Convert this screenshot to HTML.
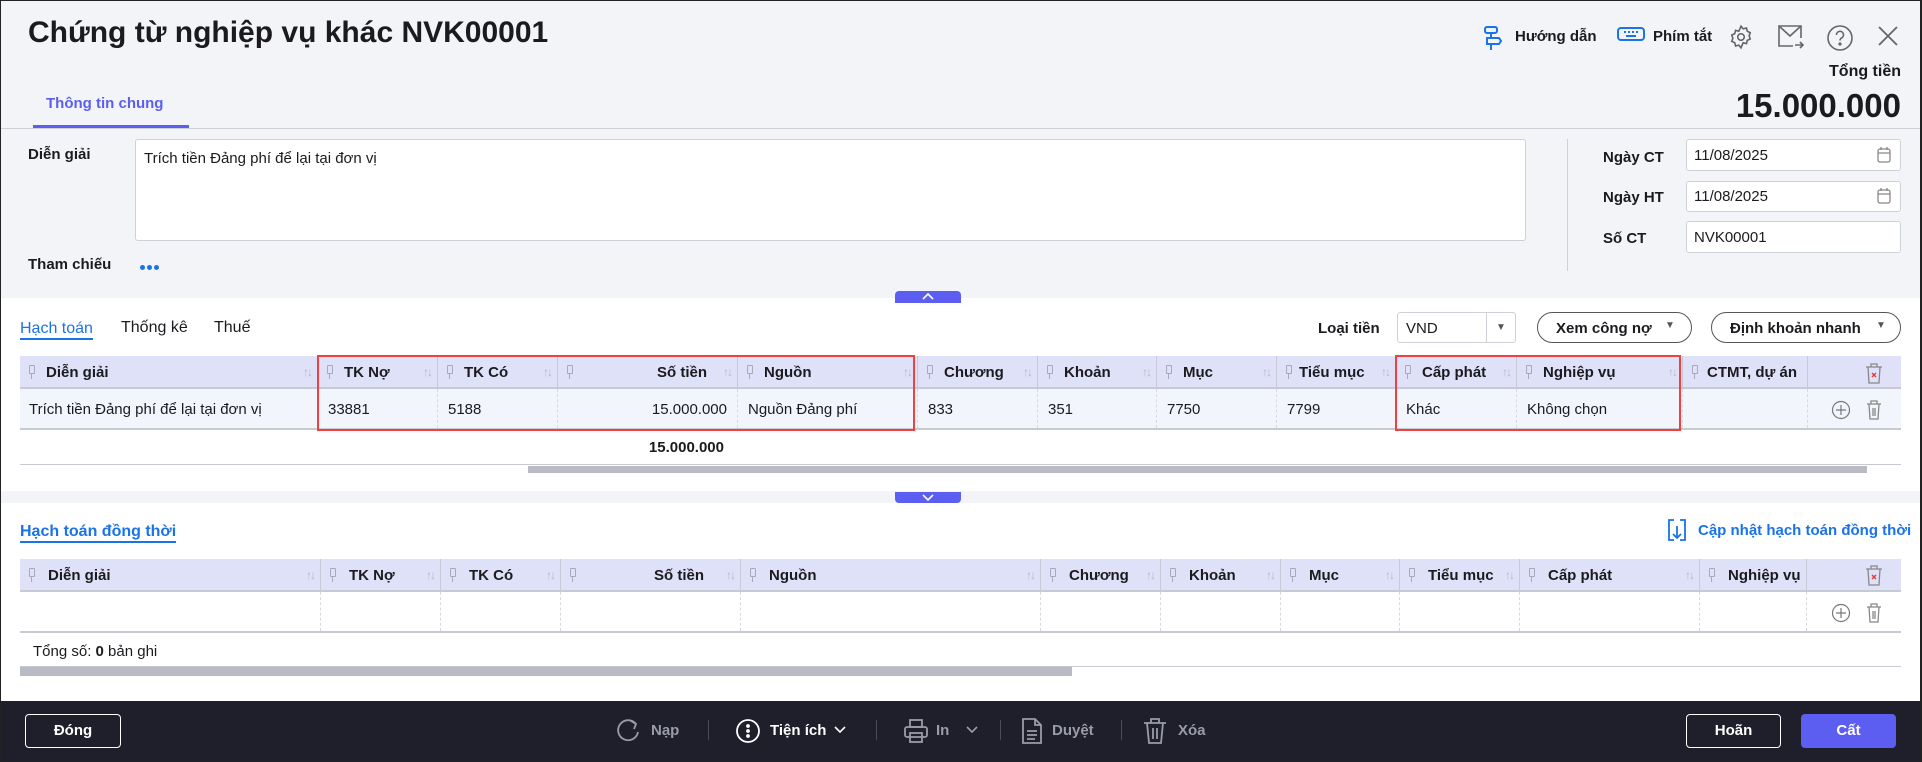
<!DOCTYPE html>
<html><head><meta charset="utf-8"><style>
*{box-sizing:border-box;margin:0;padding:0}
body{width:1922px;height:762px;overflow:hidden;font-family:"Liberation Sans",sans-serif;color:#1b1b1f;font-size:15px;background:#fff;position:relative}
.a{position:absolute;white-space:nowrap}
.b{font-weight:bold}
.hdr{position:absolute;left:0;top:0;width:1922px;height:298px;background:#f3f4f8}
.inp{position:absolute;background:#fff;border:1px solid #cfd1d8;border-radius:3px}
.th{position:absolute;height:33px;background:#dfe1f9;border-bottom:2px solid #c8cad3}
.cell{position:absolute;top:0;height:100%;border-left:1px dashed #d8d9e0;font-size:15px}
.hc{position:absolute;top:0;height:100%;border-left:1px solid #c8cad8;font-weight:bold;font-size:15px}
.hc::before{content:"";position:absolute;left:9px;top:9px;width:4px;height:7px;border:1px solid #a8aabb;border-radius:1px}
.hc::after{content:"";position:absolute;left:11px;top:17px;width:1px;height:6px;background:#a8aabb}
.hc.np::before,.hc.np::after{display:none}
.sort{position:absolute;right:6px;top:9px;color:#b4b6c4;font-size:12px;font-weight:normal;letter-spacing:-2px}
.btn{position:absolute;border-radius:4px;color:#fff;font-weight:bold;text-align:center;line-height:32px;font-size:15px}
.sep{position:absolute;top:720px;width:1px;height:20px;background:#4a4c5a}
.ft{position:absolute;top:722px;color:#9a9ca8;font-weight:bold;font-size:15px}
</style></head><body>
<div class="hdr"></div>
<div class="a b" style="left:28px;top:16px;font-size:30px">Chứng từ nghiệp vụ khác NVK00001</div>
<div class="a b" style="left:46px;top:95px;color:#5b5ef0;font-size:15px">Thông tin chung</div>
<div class="a" style="left:33px;top:125px;width:156px;height:3px;background:#5b5ef0"></div>
<div class="a" style="left:0;top:128px;width:1922px;height:1px;background:#cfd1d8"></div>

<!-- top right -->
<svg class="a" style="left:1483px;top:25px" width="20" height="26" viewBox="0 0 20 26" fill="none" stroke="#1a73e8" stroke-width="2"><rect x="2" y="2" width="12" height="6" rx="2"/><path d="M4 13h12l2 3-2 3H4z"/><path d="M8 8v5M8 19v6"/></svg>
<div class="a b" style="left:1515px;top:28px;font-size:15px">Hướng dẫn</div>
<svg class="a" style="left:1617px;top:26px" width="28" height="18" viewBox="0 0 28 18" fill="none" stroke="#1a73e8" stroke-width="2"><rect x="1" y="2" width="26" height="12" rx="3"/><path d="M7 6h2M11 6h2M15 6h2M19 6h2M9 10h10"/></svg>
<div class="a b" style="left:1653px;top:28px;font-size:15px">Phím tắt</div>
<svg class="a" style="left:1728px;top:24px" width="26" height="26" viewBox="0 0 24 24" fill="none" stroke="#666" stroke-width="1.5"><circle cx="12" cy="12" r="3"/><path d="M12 2l2 2.5 3-.8.8 3 2.7 1.3-1 2.9 1 2.9-2.7 1.3-.8 3-3-.8L12 22l-2-2.5-3 .8-.8-3-2.7-1.3 1-2.9-1-2.9 2.7-1.3.8-3 3 .8z"/></svg>
<svg class="a" style="left:1777px;top:24px" width="28" height="26" viewBox="0 0 28 26" fill="none" stroke="#666" stroke-width="1.6"><path d="M24 14V2H2v20h14"/><path d="M2 2l11 10L24 2"/><path d="M18 21h8M23 18l3 3-3 3"/></svg>
<svg class="a" style="left:1826px;top:24px" width="28" height="28" viewBox="0 0 28 28" fill="none" stroke="#666" stroke-width="1.6"><circle cx="14" cy="14" r="12"/><path d="M10.5 11a3.5 3.5 0 1 1 5 3c-1 .6-1.5 1.3-1.5 2.5"/><circle cx="14" cy="20" r=".8" fill="#666"/></svg>
<svg class="a" style="left:1877px;top:25px" width="22" height="22" viewBox="0 0 22 22" stroke="#666" stroke-width="1.8"><path d="M2 2l18 18M20 2L2 20"/></svg>
<div class="a b" style="right:21px;top:63px;font-size:16px">Tổng tiền</div>
<div class="a b" style="right:21px;top:87px;font-size:33px">15.000.000</div>

<!-- form -->
<div class="a b" style="left:28px;top:146px">Diễn giải</div>
<div class="inp" style="left:135px;top:139px;width:1391px;height:102px"></div>
<div class="a" style="left:144px;top:150px">Trích tiền Đảng phí để lại tại đơn vị</div>
<div class="a b" style="left:28px;top:256px">Tham chiếu</div>
<div class="a" style="left:140px;top:265px;width:5px;height:5px;border-radius:50%;background:#1a73e8;box-shadow:7px 0 #1a73e8,14px 0 #1a73e8"></div>
<div class="a" style="left:1567px;top:139px;width:1px;height:132px;background:#cfd1d8"></div>
<div class="a b" style="left:1603px;top:149px">Ngày CT</div>
<div class="a b" style="left:1603px;top:189px">Ngày HT</div>
<div class="a b" style="left:1603px;top:230px">Số CT</div>
<div class="inp" style="left:1686px;top:139px;width:215px;height:32px"></div>
<div class="inp" style="left:1686px;top:181px;width:215px;height:31px"></div>
<div class="inp" style="left:1686px;top:221px;width:215px;height:32px"></div>
<div class="a" style="left:1694px;top:147px">11/08/2025</div>
<div class="a" style="left:1694px;top:188px">11/08/2025</div>
<div class="a" style="left:1694px;top:229px">NVK00001</div>
<svg class="a" style="left:1877px;top:146px" width="14" height="17" viewBox="0 0 14 17" fill="none" stroke="#888" stroke-width="1.3"><rect x="1" y="3" width="12" height="13" rx="2"/><path d="M1 7h12M4 1v3M10 1v3"/></svg>
<svg class="a" style="left:1877px;top:187px" width="14" height="17" viewBox="0 0 14 17" fill="none" stroke="#888" stroke-width="1.3"><rect x="1" y="3" width="12" height="13" rx="2"/><path d="M1 7h12M4 1v3M10 1v3"/></svg>

<div class="a" style="left:895px;top:291px;width:66px;height:12px;background:#5b5ef0;border-radius:4px 4px 0 0"></div>
<svg class="a" style="left:921px;top:292px" width="14" height="9" viewBox="0 0 14 9" fill="none" stroke="#fff" stroke-width="1.6"><path d="M2 7l5-5 5 5"/></svg>

<!-- tabs -->
<div class="a" style="left:20px;top:319px;color:#1a73e8;font-size:16px;border-bottom:2px solid #1a73e8;line-height:19px">Hạch toán</div>
<div class="a" style="left:121px;top:319px;font-size:16px">Thống kê</div>
<div class="a" style="left:214px;top:319px;font-size:16px">Thuế</div>
<div class="a b" style="left:1318px;top:320px">Loại tiền</div>
<div class="inp" style="left:1397px;top:312px;width:119px;height:31px"></div>
<div class="a" style="left:1406px;top:320px">VND</div>
<div class="a" style="left:1486px;top:313px;width:1px;height:29px;background:#cfd1d8"></div>
<div class="a" style="left:1496px;top:322px;font-size:10px;color:#555">▼</div>
<div class="a" style="left:1537px;top:312px;width:155px;height:31px;border:1px solid #555;border-radius:16px;background:#fff"></div>
<div class="a b" style="left:1556px;top:320px">Xem công nợ</div>
<div class="a" style="left:1665px;top:320px;font-size:10px;color:#555">▼</div>
<div class="a" style="left:1711px;top:312px;width:190px;height:31px;border:1px solid #555;border-radius:16px;background:#fff"></div>
<div class="a b" style="left:1730px;top:320px">Định khoản nhanh</div>
<div class="a" style="left:1876px;top:320px;font-size:10px;color:#555">▼</div>

<!-- table 1 -->
<div class="th" style="left:20px;top:356px;width:1881px">
 <div class="hc" style="left:0;width:297px;border-left:none"><span class="a" style="left:26px;top:8px">Diễn giải</span><span class="sort">↑↓</span></div>
 <div class="hc" style="left:297px;width:120px"><span class="a" style="left:26px;top:8px">TK Nợ</span><span class="sort">↑↓</span></div>
 <div class="hc" style="left:417px;width:120px"><span class="a" style="left:26px;top:8px">TK Có</span><span class="sort">↑↓</span></div>
 <div class="hc" style="left:537px;width:180px"><span class="a" style="right:30px;top:8px">Số tiền</span><span class="sort">↑↓</span></div>
 <div class="hc" style="left:717px;width:180px"><span class="a" style="left:26px;top:8px">Nguồn</span><span class="sort">↑↓</span></div>
 <div class="hc" style="left:897px;width:120px"><span class="a" style="left:26px;top:8px">Chương</span><span class="sort">↑↓</span></div>
 <div class="hc" style="left:1017px;width:119px"><span class="a" style="left:26px;top:8px">Khoản</span><span class="sort">↑↓</span></div>
 <div class="hc" style="left:1136px;width:120px"><span class="a" style="left:26px;top:8px">Mục</span><span class="sort">↑↓</span></div>
 <div class="hc" style="left:1256px;width:119px"><span class="a" style="left:22px;top:8px">Tiểu mục</span><span class="sort">↑↓</span></div>
 <div class="hc" style="left:1375px;width:121px"><span class="a" style="left:26px;top:8px">Cấp phát</span><span class="sort">↑↓</span></div>
 <div class="hc" style="left:1496px;width:166px"><span class="a" style="left:26px;top:8px">Nghiệp vụ</span><span class="sort">↑↓</span></div>
 <div class="hc" style="left:1662px;width:125px"><span class="a" style="left:24px;top:8px">CTMT, dự án</span></div>
 <div class="hc np" style="left:1787px;width:94px"></div>
</div>
<div class="a" style="left:20px;top:389px;width:1881px;height:41px;background:#f3f5fd;border-bottom:2px solid #c8cad3">
 <div class="cell" style="left:0;width:297px;border:none"><span class="a" style="left:9px;top:12px">Trích tiền Đảng phí để lại tại đơn vị</span></div>
 <div class="cell" style="left:297px;width:120px"><span class="a" style="left:10px;top:12px">33881</span></div>
 <div class="cell" style="left:417px;width:120px"><span class="a" style="left:10px;top:12px">5188</span></div>
 <div class="cell" style="left:537px;width:180px"><span class="a" style="right:10px;top:12px">15.000.000</span></div>
 <div class="cell" style="left:717px;width:180px"><span class="a" style="left:10px;top:12px">Nguồn Đảng phí</span></div>
 <div class="cell" style="left:897px;width:120px"><span class="a" style="left:10px;top:12px">833</span></div>
 <div class="cell" style="left:1017px;width:119px"><span class="a" style="left:10px;top:12px">351</span></div>
 <div class="cell" style="left:1136px;width:120px"><span class="a" style="left:10px;top:12px">7750</span></div>
 <div class="cell" style="left:1256px;width:119px"><span class="a" style="left:10px;top:12px">7799</span></div>
 <div class="cell" style="left:1375px;width:121px"><span class="a" style="left:10px;top:12px">Khác</span></div>
 <div class="cell" style="left:1496px;width:166px"><span class="a" style="left:10px;top:12px">Không chọn</span></div>
 <div class="cell" style="left:1662px;width:125px"></div>
 <div class="cell" style="left:1787px;width:94px"></div>
</div>
<div class="a" style="left:317px;top:355px;width:598px;height:76px;border:2px solid #f04040"></div>
<div class="a" style="left:1395px;top:355px;width:286px;height:76px;border:2px solid #f04040"></div>
<div class="a b" style="right:1198px;top:439px">15.000.000</div>
<div class="a" style="left:20px;top:464px;width:1881px;height:1px;background:#c8cad3"></div>
<div class="a" style="left:528px;top:466px;width:1339px;height:7px;background:#b8bbc3"></div>

<div class="a" style="left:0;top:491px;width:1922px;height:12px;background:#f3f4f8"></div>
<div class="a" style="left:895px;top:492px;width:66px;height:11px;background:#5b5ef0;border-radius:0 0 4px 4px"></div>
<svg class="a" style="left:921px;top:493px" width="14" height="9" viewBox="0 0 14 9" fill="none" stroke="#fff" stroke-width="1.6"><path d="M2 2l5 5 5-5"/></svg>

<!-- table 2 -->
<div class="a b" style="left:20px;top:522px;color:#1a73e8;font-size:16px;border-bottom:2px solid #1a73e8;line-height:19px">Hạch toán đồng thời</div>
<svg class="a" style="left:1666px;top:518px" width="22" height="24" viewBox="0 0 22 24" fill="none" stroke="#1a73e8" stroke-width="1.8"><path d="M8 2H3v20h5M14 2h5v20h-5M11 8v12M7 16l4 4 4-4"/></svg>
<div class="a" style="left:1698px;top:522px;color:#1a73e8;font-size:15px;font-weight:bold">Cập nhật hạch toán đồng thời</div>
<div class="th" style="left:20px;top:559px;width:1881px">
 <div class="hc" style="left:0;width:300px;border-left:none"><span class="a" style="left:28px;top:8px">Diễn giải</span><span class="sort">↑↓</span></div>
 <div class="hc" style="left:300px;width:120px"><span class="a" style="left:28px;top:8px">TK Nợ</span><span class="sort">↑↓</span></div>
 <div class="hc" style="left:420px;width:120px"><span class="a" style="left:28px;top:8px">TK Có</span><span class="sort">↑↓</span></div>
 <div class="hc" style="left:540px;width:180px"><span class="a" style="right:36px;top:8px">Số tiền</span><span class="sort">↑↓</span></div>
 <div class="hc" style="left:720px;width:300px"><span class="a" style="left:28px;top:8px">Nguồn</span><span class="sort">↑↓</span></div>
 <div class="hc" style="left:1020px;width:120px"><span class="a" style="left:28px;top:8px">Chương</span><span class="sort">↑↓</span></div>
 <div class="hc" style="left:1140px;width:120px"><span class="a" style="left:28px;top:8px">Khoản</span><span class="sort">↑↓</span></div>
 <div class="hc" style="left:1260px;width:119px"><span class="a" style="left:28px;top:8px">Mục</span><span class="sort">↑↓</span></div>
 <div class="hc" style="left:1379px;width:120px"><span class="a" style="left:28px;top:8px">Tiểu mục</span><span class="sort">↑↓</span></div>
 <div class="hc" style="left:1499px;width:180px"><span class="a" style="left:28px;top:8px">Cấp phát</span><span class="sort">↑↓</span></div>
 <div class="hc" style="left:1679px;width:107px"><span class="a" style="left:28px;top:8px">Nghiệp vụ</span></div>
 <div class="hc np" style="left:1786px;width:95px"></div>
</div>
<div class="a" style="left:20px;top:592px;width:1881px;height:41px;border-bottom:2px solid #c8cad3">
 <div class="cell" style="left:300px;width:120px"></div><div class="cell" style="left:420px;width:120px"></div><div class="cell" style="left:540px;width:180px"></div><div class="cell" style="left:720px;width:300px"></div><div class="cell" style="left:1020px;width:120px"></div><div class="cell" style="left:1140px;width:120px"></div><div class="cell" style="left:1260px;width:119px"></div><div class="cell" style="left:1379px;width:120px"></div><div class="cell" style="left:1499px;width:180px"></div><div class="cell" style="left:1679px;width:107px"></div><div class="cell" style="left:1786px;width:95px"></div>
</div>
<div class="a" style="left:33px;top:643px">Tổng số: <b>0</b> bản ghi</div>
<div class="a" style="left:20px;top:666px;width:1881px;height:1px;background:#c8cad3"></div>
<div class="a" style="left:20px;top:667px;width:1052px;height:9px;background:#b8bbc3"></div>

<!-- row icons -->
<svg class="a" style="left:1865px;top:362px" width="18" height="22" viewBox="0 0 18 22" fill="none" stroke="#888" stroke-width="1.3"><path d="M1 5h16M6 5V2h6v3M3 5l1 16h10l1-16"/><path d="M7 11l4 4M11 11l-4 4" stroke="#e33"/></svg>
<svg class="a" style="left:1865px;top:564px" width="18" height="22" viewBox="0 0 18 22" fill="none" stroke="#888" stroke-width="1.3"><path d="M1 5h16M6 5V2h6v3M3 5l1 16h10l1-16"/><path d="M7 11l4 4M11 11l-4 4" stroke="#e33"/></svg>
<svg class="a" style="left:1831px;top:400px" width="20" height="20" viewBox="0 0 20 20" fill="none" stroke="#777" stroke-width="1.2"><circle cx="10" cy="10" r="8.5"/><path d="M10 5v10M5 10h10"/></svg>
<svg class="a" style="left:1866px;top:399px" width="16" height="21" viewBox="0 0 16 21" fill="none" stroke="#888" stroke-width="1.3"><path d="M1 5h14M5 5V2h6v3M3 5l1 15h8l1-15M7 9v8M9 9v8"/></svg>
<svg class="a" style="left:1831px;top:603px" width="20" height="20" viewBox="0 0 20 20" fill="none" stroke="#777" stroke-width="1.2"><circle cx="10" cy="10" r="8.5"/><path d="M10 5v10M5 10h10"/></svg>
<svg class="a" style="left:1866px;top:602px" width="16" height="21" viewBox="0 0 16 21" fill="none" stroke="#888" stroke-width="1.3"><path d="M1 5h14M5 5V2h6v3M3 5l1 15h8l1-15M7 9v8M9 9v8"/></svg>

<!-- footer -->
<div class="a" style="left:0;top:701px;width:1922px;height:61px;background:#1e1f2b"></div>
<div class="btn" style="left:25px;top:714px;width:96px;height:34px;border:1px solid #fff">Đóng</div>
<svg class="a" style="left:617px;top:718px" width="24" height="26" viewBox="0 0 24 26" fill="none" stroke="#9a9ca8" stroke-width="1.8"><path d="M19 6A10 10 0 1 0 21 14"/><path d="M14 3l5 3-2 5"/></svg>
<div class="ft" style="left:651px">Nạp</div>
<div class="sep" style="left:708px"></div>
<svg class="a" style="left:735px;top:718px" width="26" height="26" viewBox="0 0 26 26" fill="none" stroke="#fff" stroke-width="1.8"><circle cx="13" cy="13" r="11"/><circle cx="13" cy="8" r="1" fill="#fff"/><circle cx="13" cy="13" r="1" fill="#fff"/><circle cx="13" cy="18" r="1" fill="#fff"/></svg>
<div class="ft" style="left:770px;color:#fff">Tiện ích</div>
<svg class="a" style="left:834px;top:726px" width="12" height="8" viewBox="0 0 12 8" fill="none" stroke="#fff" stroke-width="1.6"><path d="M1 1l5 5 5-5"/></svg>
<div class="sep" style="left:876px"></div>
<svg class="a" style="left:903px;top:718px" width="26" height="26" viewBox="0 0 26 26" fill="none" stroke="#9a9ca8" stroke-width="1.8"><rect x="7" y="2" width="12" height="7"/><rect x="2" y="9" width="22" height="10" rx="2"/><rect x="7" y="15" width="12" height="9"/></svg>
<div class="ft" style="left:936px">In</div>
<svg class="a" style="left:966px;top:726px" width="12" height="8" viewBox="0 0 12 8" fill="none" stroke="#9a9ca8" stroke-width="1.6"><path d="M1 1l5 5 5-5"/></svg>
<div class="sep" style="left:1000px"></div>
<svg class="a" style="left:1021px;top:717px" width="22" height="28" viewBox="0 0 22 28" fill="none" stroke="#9a9ca8" stroke-width="1.8"><path d="M2 2h12l6 6v18H2z"/><path d="M14 2v6h6M6 14h10M6 18h10M6 22h8"/></svg>
<div class="ft" style="left:1052px">Duyệt</div>
<div class="sep" style="left:1121px"></div>
<svg class="a" style="left:1143px;top:717px" width="24" height="28" viewBox="0 0 24 28" fill="none" stroke="#9a9ca8" stroke-width="1.8"><path d="M1 6h22M8 6V2h8v4M4 6l2 20h12l2-20M10 11v11M14 11v11"/></svg>
<div class="ft" style="left:1178px">Xóa</div>
<div class="btn" style="left:1686px;top:714px;width:95px;height:34px;border:1px solid #fff">Hoãn</div>
<div class="btn" style="left:1801px;top:714px;width:95px;height:34px;line-height:34px;background:#5b5ef0">Cất</div>

<div class="a" style="left:0;top:0;width:1922px;height:762px;border:1px solid #222;border-right-width:2px;pointer-events:none"></div>
</body></html>
